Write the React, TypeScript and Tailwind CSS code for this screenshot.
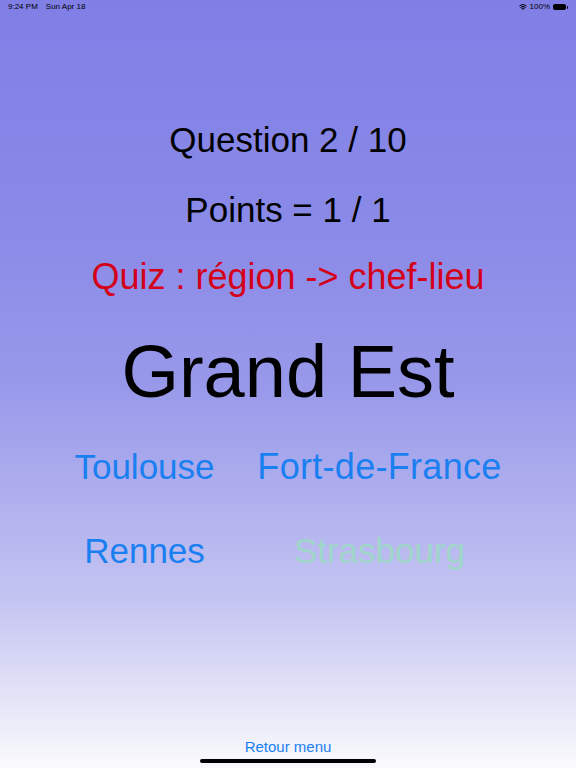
import { Wifi } from "lucide-react";

function StatusBar() {
  return (
    <div className="flex h-[14px] items-center justify-between px-2 text-[8px] leading-none text-black">
      <div className="flex gap-2">
        <span>9:24 PM</span>
        <span>Sun Apr 18</span>
      </div>
      <div className="flex items-center gap-[3px]">
        <Wifi size={8} strokeWidth={3} />
        <span>100%</span>
        <div className="flex items-center">
          <div className="h-[6px] w-[13px] rounded-[2px] bg-black" />
          <div className="ml-[1px] h-[3px] w-[1px] rounded-r bg-black" />
        </div>
      </div>
    </div>
  );
}

export default function App() {
  const left = ["Toulouse", "Rennes"];
  const right = ["Fort-de-France", "Strasbourg"];

  return (
    <div
      className="flex h-[768px] w-[576px] flex-col overflow-hidden bg-[linear-gradient(to_bottom,#7f7fe6_0%,#8a8ae8_30%,#9898ea_50%,#c4c4f2_78%,#e6e6f8_92%,#fafafd_100%)]"
      style={{ fontFamily: '"Liberation Sans", Arial, sans-serif' }}
    >
      <StatusBar />
      <div className="flex flex-1 flex-col items-center">
        <div className="mt-[106px] text-[35px] leading-[40px] text-black">Question 2 / 10</div>
        <div className="mt-[30px] text-[35px] leading-[40px] text-black">Points = 1 / 1</div>
        <div className="mt-[27px] text-[36px] leading-[40px] text-[#d4001a]">Quiz : région -&gt; chef-lieu</div>
        <div className="mt-[33px] text-[74px] leading-[84px] text-black">Grand Est</div>
        <div className="mt-[33px] flex gap-[41px]">
          <div className="flex w-[142px] flex-col items-center gap-[44px]">
            {left.map((c) => (
              <button key={c} className="whitespace-nowrap text-[35px] leading-[40px] text-[#1a7ff0]">
                {c}
              </button>
            ))}
          </div>
          <div className="flex w-[246px] flex-col items-center gap-[44px]">
            {right.map((c) => (
              <button
                key={c}
                className={
                  c === "Strasbourg"
                    ? "whitespace-nowrap text-[35px] leading-[40px] text-[#9fd6c9]"
                    : "whitespace-nowrap text-[36px] leading-[40px] tracking-[0.3px] text-[#1a7ff0]"
                }
              >
                {c}
              </button>
            ))}
          </div>
        </div>
        <div className="flex-1" />
        <button className="text-[15px] leading-[18px] text-[#1a7ff0]">Retour menu</button>
        <div className="mb-[5px] mt-[3px] h-[4px] w-[176px] rounded-full bg-black" />
      </div>
    </div>
  );
}
